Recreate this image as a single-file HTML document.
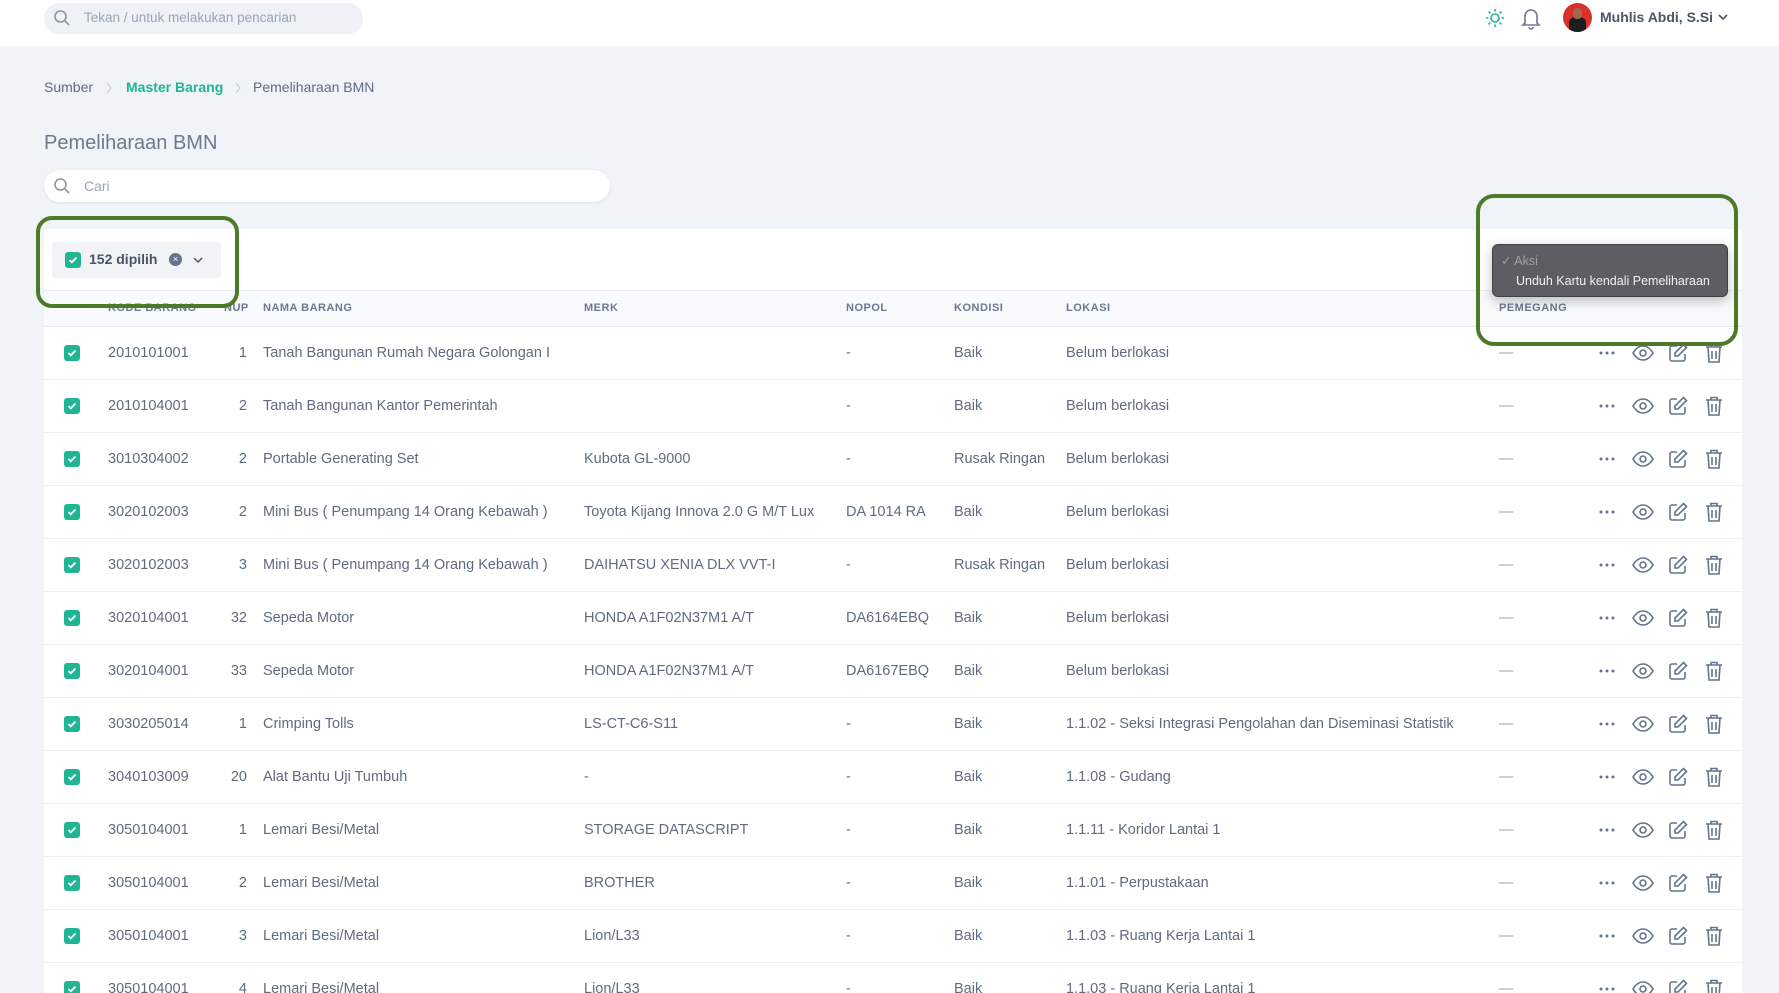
<!DOCTYPE html>
<html><head><meta charset="utf-8"><style>
*{box-sizing:border-box;margin:0;padding:0}
html{height:993px;overflow:hidden}
body{width:1779px;height:993px;overflow:hidden;background:#f0f3f8;font-family:"Liberation Sans",sans-serif;color:#5f6b80;position:relative;font-size:14.5px}
.a{position:absolute;white-space:nowrap}
.top{position:absolute;left:0;top:0;width:1779px;height:46px;background:#fff}
.cb{position:absolute;width:16px;height:16px;border-radius:3px;background:#1fb595}
.cb svg{position:absolute;left:3px;top:3px}
.hd{position:absolute;font-size:11px;font-weight:bold;letter-spacing:.5px;color:#6b7a90;top:302px}
.row{position:absolute;left:44px;width:1698px;height:53px;border-bottom:1px solid #edf0f4;background:#fff}
.row span{position:absolute;top:18px;white-space:nowrap}
.ic{position:absolute;top:15px}
#clip{position:absolute;left:0;top:0;width:1779px;height:993px;overflow:hidden}
</style></head><body><div id="clip">
<div class="top"></div>
<div class="a" style="left:44px;top:3px;width:319px;height:31px;border-radius:16px;background:#eef1f6"></div>
<svg class="a" style="left:53px;top:9px" width="18" height="18" viewBox="0 0 18 18" fill="none" stroke="#8a96a8" stroke-width="1.6"><circle cx="7.5" cy="7.5" r="5.5"/><path d="M11.5 11.5L16 16"/></svg>
<div class="a" style="left:84px;top:10px;font-size:13.5px;color:#9aa5b5">Tekan / untuk melakukan pencarian</div>
<svg class="a" style="left:1484px;top:7px" width="22" height="22" viewBox="0 0 22 22" fill="none" stroke="#1fb595" stroke-width="1.6"><circle cx="11" cy="11" r="4"/><path d="M11 2v2.5M11 17.5V20M2 11h2.5M17.5 11H20M4.6 4.6l1.8 1.8M15.6 15.6l1.8 1.8M4.6 17.4l1.8-1.8M15.6 6.4l1.8-1.8"/></svg>
<svg class="a" style="left:1521px;top:6px" width="20" height="24" viewBox="0 0 20 24" fill="none" stroke="#6b7a90" stroke-width="1.6"><path d="M4 17V10a6 6 0 0 1 12 0v7l2 2H2z"/><path d="M8 21a2 2 0 0 0 4 0"/></svg>
<div class="a" style="left:1563px;top:3px;width:29px;height:29px;border-radius:50%;background:#d9302c;overflow:hidden"><div style="position:absolute;left:6px;top:14px;width:17px;height:16px;background:#1c1c22;border-radius:6px 6px 0 0"></div><div style="position:absolute;left:10px;top:5px;width:9px;height:11px;background:#a0674c;border-radius:4px"></div></div>
<div class="a" style="left:1600px;top:9px;font-size:14px;font-weight:bold;color:#4a5568">Muhlis Abdi, S.Si</div>
<svg class="a" style="left:1717px;top:12px" width="12" height="10" viewBox="0 0 12 10" fill="none" stroke="#4a5568" stroke-width="1.6"><path d="M2 3l4 4 4-4"/></svg>

<div class="a" style="left:44px;top:79px;color:#5f6b80;font-size:14px">Sumber</div>
<svg class="a" style="left:105px;top:82px" width="8" height="12" viewBox="0 0 8 12" fill="none" stroke="#c5ccd6" stroke-width="1.2"><path d="M2 1l4 5-4 5"/></svg>
<div class="a" style="left:126px;top:79px;color:#1fb595;font-weight:bold;font-size:14px">Master Barang</div>
<svg class="a" style="left:234px;top:82px" width="8" height="12" viewBox="0 0 8 12" fill="none" stroke="#c5ccd6" stroke-width="1.2"><path d="M2 1l4 5-4 5"/></svg>
<div class="a" style="left:253px;top:79px;color:#5f6b80;font-size:14px">Pemeliharaan BMN</div>
<div class="a" style="left:44px;top:132px;font-size:20px;color:#6b7a90">Pemeliharaan BMN</div>
<div class="a" style="left:44px;top:170px;width:566px;height:32px;border-radius:16px;background:#fff;box-shadow:0 1px 3px rgba(0,0,0,.08)"></div>
<svg class="a" style="left:53px;top:177px" width="18" height="18" viewBox="0 0 18 18" fill="none" stroke="#8a96a8" stroke-width="1.6"><circle cx="7.5" cy="7.5" r="5.5"/><path d="M11.5 11.5L16 16"/></svg>
<div class="a" style="left:84px;top:178px;color:#9aa5b5;font-size:14px">Cari</div>

<div class="a" style="left:44px;top:229px;width:1698px;height:764px;background:#fff"></div>
<div class="a" style="left:44px;top:290px;width:1698px;height:37px;background:#f8fafc;border-top:1px solid #e7ebf0;border-bottom:1px solid #e7ebf0"></div>
<div class="a" style="left:52px;top:242px;width:169px;height:36px;border-radius:4px;background:#f1f3f6"></div>
<div class="cb" style="left:65px;top:252px"><svg width="10" height="10" viewBox="0 0 10 10" fill="none" stroke="#fff" stroke-width="1.8"><path d="M1.5 5l2.3 2.3L8.5 2.5"/></svg></div>
<div class="a" style="left:89px;top:251px;font-weight:bold;color:#4a5568;font-size:14px">152 dipilih</div>
<div class="a" style="left:169px;top:253px;width:13px;height:13px;border-radius:50%;background:#64748b;color:#fff;font-size:9px;text-align:center;line-height:13px">×</div>
<svg class="a" style="left:192px;top:255px" width="12" height="10" viewBox="0 0 12 10" fill="none" stroke="#4a5568" stroke-width="1.5"><path d="M2 3l4 4 4-4"/></svg>

<div class="hd" style="left:108px">KODE BARANG</div>
<div class="hd" style="left:224px">NUP</div>
<div class="hd" style="left:263px">NAMA BARANG</div>
<div class="hd" style="left:584px">MERK</div>
<div class="hd" style="left:846px">NOPOL</div>
<div class="hd" style="left:954px">KONDISI</div>
<div class="hd" style="left:1066px">LOKASI</div>
<div class="hd" style="left:1499px">PEMEGANG</div>

<div id="rows"></div>
<script>
var d=[["2010101001","1","Tanah Bangunan Rumah Negara Golongan I","","-","Baik","Belum berlokasi"],
["2010104001","2","Tanah Bangunan Kantor Pemerintah","","-","Baik","Belum berlokasi"],
["3010304002","2","Portable Generating Set","Kubota GL-9000","-","Rusak Ringan","Belum berlokasi"],
["3020102003","2","Mini Bus ( Penumpang 14 Orang Kebawah )","Toyota Kijang Innova 2.0 G M/T Lux","DA 1014 RA","Baik","Belum berlokasi"],
["3020102003","3","Mini Bus ( Penumpang 14 Orang Kebawah )","DAIHATSU XENIA DLX VVT-I","-","Rusak Ringan","Belum berlokasi"],
["3020104001","32","Sepeda Motor","HONDA A1F02N37M1 A/T","DA6164EBQ","Baik","Belum berlokasi"],
["3020104001","33","Sepeda Motor","HONDA A1F02N37M1 A/T","DA6167EBQ","Baik","Belum berlokasi"],
["3030205014","1","Crimping Tolls","LS-CT-C6-S11","-","Baik","1.1.02 - Seksi Integrasi Pengolahan dan Diseminasi Statistik"],
["3040103009","20","Alat Bantu Uji Tumbuh","-","-","Baik","1.1.08 - Gudang"],
["3050104001","1","Lemari Besi/Metal","STORAGE DATASCRIPT","-","Baik","1.1.11 - Koridor Lantai 1"],
["3050104001","2","Lemari Besi/Metal","BROTHER","-","Baik","1.1.01 - Perpustakaan"],
["3050104001","3","Lemari Besi/Metal","Lion/L33","-","Baik","1.1.03 - Ruang Kerja Lantai 1"],
["3050104001","4","Lemari Besi/Metal","Lion/L33","-","Baik","1.1.03 - Ruang Kerja Lantai 1"]];
var s="",st='fill="none" stroke="#64748b" stroke-width="1.6"';
d.forEach(function(r,i){var y=327+i*53,o=-44;
s+='<div class="row" style="top:'+y+'px">'+
'<div class="cb" style="left:'+(64+o)+'px;top:18px"><svg width="10" height="10" viewBox="0 0 10 10" fill="none" stroke="#fff" stroke-width="1.8"><path d="M1.5 5l2.3 2.3L8.5 2.5"/></svg></div>'+
'<span style="left:'+(108+o)+'px">'+r[0]+'</span>'+
'<span style="left:'+(207+o)+'px;width:40px;text-align:right">'+r[1]+'</span>'+
'<span style="left:'+(263+o)+'px">'+r[2]+'</span>'+
'<span style="left:'+(584+o)+'px">'+r[3]+'</span>'+
'<span style="left:'+(846+o)+'px">'+r[4]+'</span>'+
'<span style="left:'+(954+o)+'px">'+r[5]+'</span>'+
'<span style="left:'+(1066+o)+'px">'+r[6]+'</span>'+
'<span style="left:'+(1499+o)+'px;color:#94a0b0">—</span>'+
'<svg class="ic" style="left:'+(1597+o)+'px" width="20" height="22" viewBox="0 0 20 22"><circle cx="4" cy="11" r="1.5" fill="#64748b"/><circle cx="10" cy="11" r="1.5" fill="#64748b"/><circle cx="16" cy="11" r="1.5" fill="#64748b"/></svg>'+
'<svg class="ic" style="left:'+(1631+o)+'px" width="24" height="22" viewBox="0 0 24 22" '+st+'><path d="M2 11c3-5 6.5-7 10-7s7 2 10 7c-3 5-6.5 7-10 7s-7-2-10-7z"/><circle cx="12" cy="11" r="3"/></svg>'+
'<svg class="ic" style="left:'+(1667+o)+'px" width="22" height="22" viewBox="0 0 22 22" '+st+'><path d="M10 4H5a2 2 0 0 0-2 2v11a2 2 0 0 0 2 2h11a2 2 0 0 0 2-2v-5"/><path d="M16.5 2.5l3 3L11 14H8v-3z"/></svg>'+
'<svg class="ic" style="left:'+(1704+o)+'px" width="20" height="22" viewBox="0 0 20 22" '+st+'><path d="M2 5h16M7 5V2.5h6V5M4 5l1 15h10l1-15M8 9v8M12 9v8"/></svg>'+
'</div>';});
document.getElementById('rows').innerHTML=s;
</script>

<div class="a" style="left:36px;top:216px;width:203px;height:92px;border:4px solid #4e7a27;border-radius:16px"></div>
<div class="a" style="left:1476px;top:194px;width:262px;height:152px;border:4px solid #4e7a27;border-radius:18px"></div>
<div class="a" style="left:1492px;top:244px;width:236px;height:53px;border-radius:6px;background:#5d5e63;border:1px solid #3f4045;box-shadow:0 4px 12px rgba(0,0,0,.25)"></div>
<div class="a" style="left:1501px;top:253px;font-size:12.5px;color:#a0a1a6">✓ Aksi</div>
<div class="a" style="left:1516px;top:274px;font-size:12.5px;color:#f2f2f2">Unduh Kartu kendali Pemeliharaan</div>
</div></body></html>
